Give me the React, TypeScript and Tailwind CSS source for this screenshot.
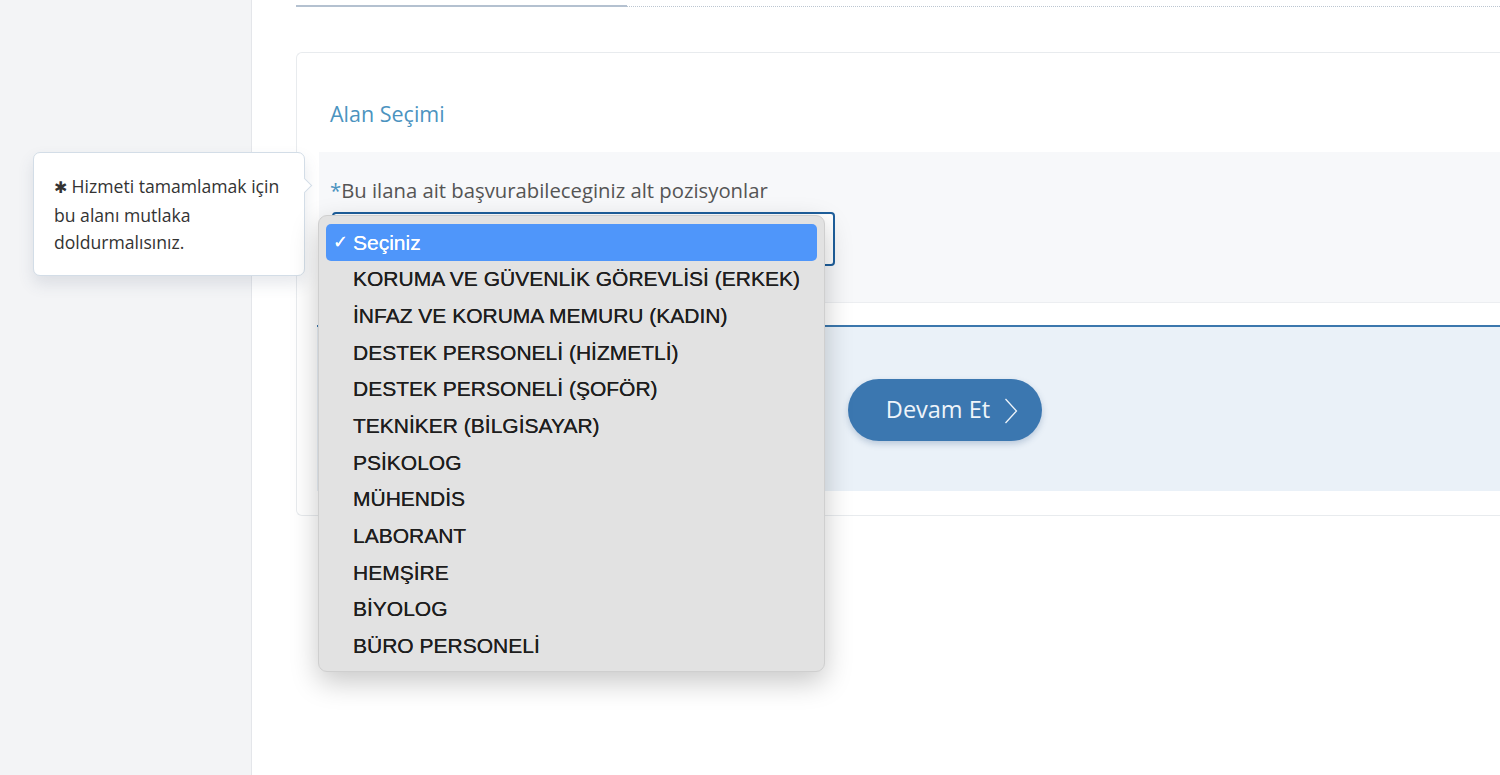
const options = [
  "KORUMA VE GÜVENLİK GÖREVLİSİ (ERKEK)",
  "İNFAZ VE KORUMA MEMURU (KADIN)",
  "DESTEK PERSONELİ (HİZMETLİ)",
  "DESTEK PERSONELİ (ŞOFÖR)",
  "TEKNİKER (BİLGİSAYAR)",
  "PSİKOLOG",
  "MÜHENDİS",
  "LABORANT",
  "HEMŞİRE",
  "BİYOLOG",
  "BÜRO PERSONELİ",
]

const Tooltip = () => (
  <div className="absolute left-[33px] top-[152px] w-[272px] h-[124px] rounded-[7px] border border-[#d3dde7] bg-white shadow-[0_8px_16px_rgba(60,80,110,0.13)] pl-[20px] pt-[20px] text-[17.6px] leading-[27.5px] text-[#333] font-['Open_Sans',sans-serif]">
    <p>
      <span className="text-[16px]">✱</span> Hizmeti tamamlamak için
      <br />
      bu alanı mutlaka
      <br />
      doldurmalısınız.
    </p>
    {/* arrow */}
    <span className="absolute right-[-6px] top-[27px] w-[11px] h-[11px] rotate-45 bg-white border-t border-r border-[#d3dde7]" />
  </div>
)

const Dropdown = () => (
  <div className="absolute left-[318px] top-[215px] w-[507px] h-[457px] rounded-[9px] bg-[#e2e2e2] border border-[#cfcfcf] shadow-[0_10px_28px_rgba(0,0,0,0.22)] pt-[8px] font-['Liberation_Sans',Arial,sans-serif] text-[21px] text-[#1e1e1e]">
    <div className="mx-[7px] h-[36.7px] rounded-[5px] bg-[#4f96fa] text-white flex items-center [text-shadow:0_0_0.6px_white]">
      <span className="w-[27px] pl-[7px] text-[18px]">✓</span>
      <span>Seçiniz</span>
    </div>
    {options.map((o) => (
      <div key={o} className="mx-[7px] h-[36.7px] flex items-center pl-[27px] [text-shadow:0_0_0.5px_#1e1e1e]">
        {o}
      </div>
    ))}
  </div>
)

export default function App() {
  return (
    <div className="relative flex w-[1500px] h-[775px] overflow-hidden bg-white font-['Open_Sans',sans-serif]">
      <aside className="w-[252px] shrink-0 bg-[#f3f4f6] border-r border-[#e4e6ea]" />

      <main className="flex-1 pl-[44px]">
        {/* progress line */}
        <div className="flex items-center mt-[5px] h-[2px]">
          <div className="w-[331px] h-[2px] bg-[#b4c1d0]" />
          <div className="flex-1 border-t border-dotted border-[#bcc6d1]" />
        </div>

        <section className="mt-[45px] h-[464px] rounded-l-[6px] border border-r-0 border-[#e8ebee] pt-[47px]">
          <h2 className="pl-[33px] text-[21.5px] leading-[28px] text-[#4b93bf]">
            Alan Seçimi
          </h2>

          <div className="ml-[22px] mt-[24px] h-[151px] bg-[#f7f8fa] pt-[24px] pl-[11px] border-b border-[#eceef1]">
            <label className="block text-[20.3px] leading-[28px] text-[#555]">
              <span className="text-[#4b93bf]">*</span>Bu ilana ait başvurabileceginiz alt pozisyonlar
            </label>
            <div className="ml-[2px] mt-[8px] w-[503px] h-[54px] rounded-[4px] border-2 border-[#1e5f9c] bg-white" />
          </div>

          <div className="ml-[20px] mt-[22px] h-[166px] border-t-2 border-[#3b77ad] bg-[#eaf1f8] pt-[52px] pl-[531px]">
            <button
              type="button"
              className="flex items-center justify-center gap-[14px] w-[194px] h-[62px] pl-[14px] rounded-full bg-[#3b77b0] text-[23.5px] text-[#eef4fa] shadow-[0_3px_6px_rgba(40,80,130,0.25)]"
            >
              Devam Et
              <svg width="14" height="26" viewBox="0 0 14 26" fill="none" className="mt-[2px]">
                <polyline points="1.5,1 12.5,13 1.5,25" stroke="#eef4fa" strokeWidth="1.3" />
              </svg>
            </button>
          </div>
        </section>
      </main>

      <Tooltip />
      <Dropdown />
    </div>
  )
}
